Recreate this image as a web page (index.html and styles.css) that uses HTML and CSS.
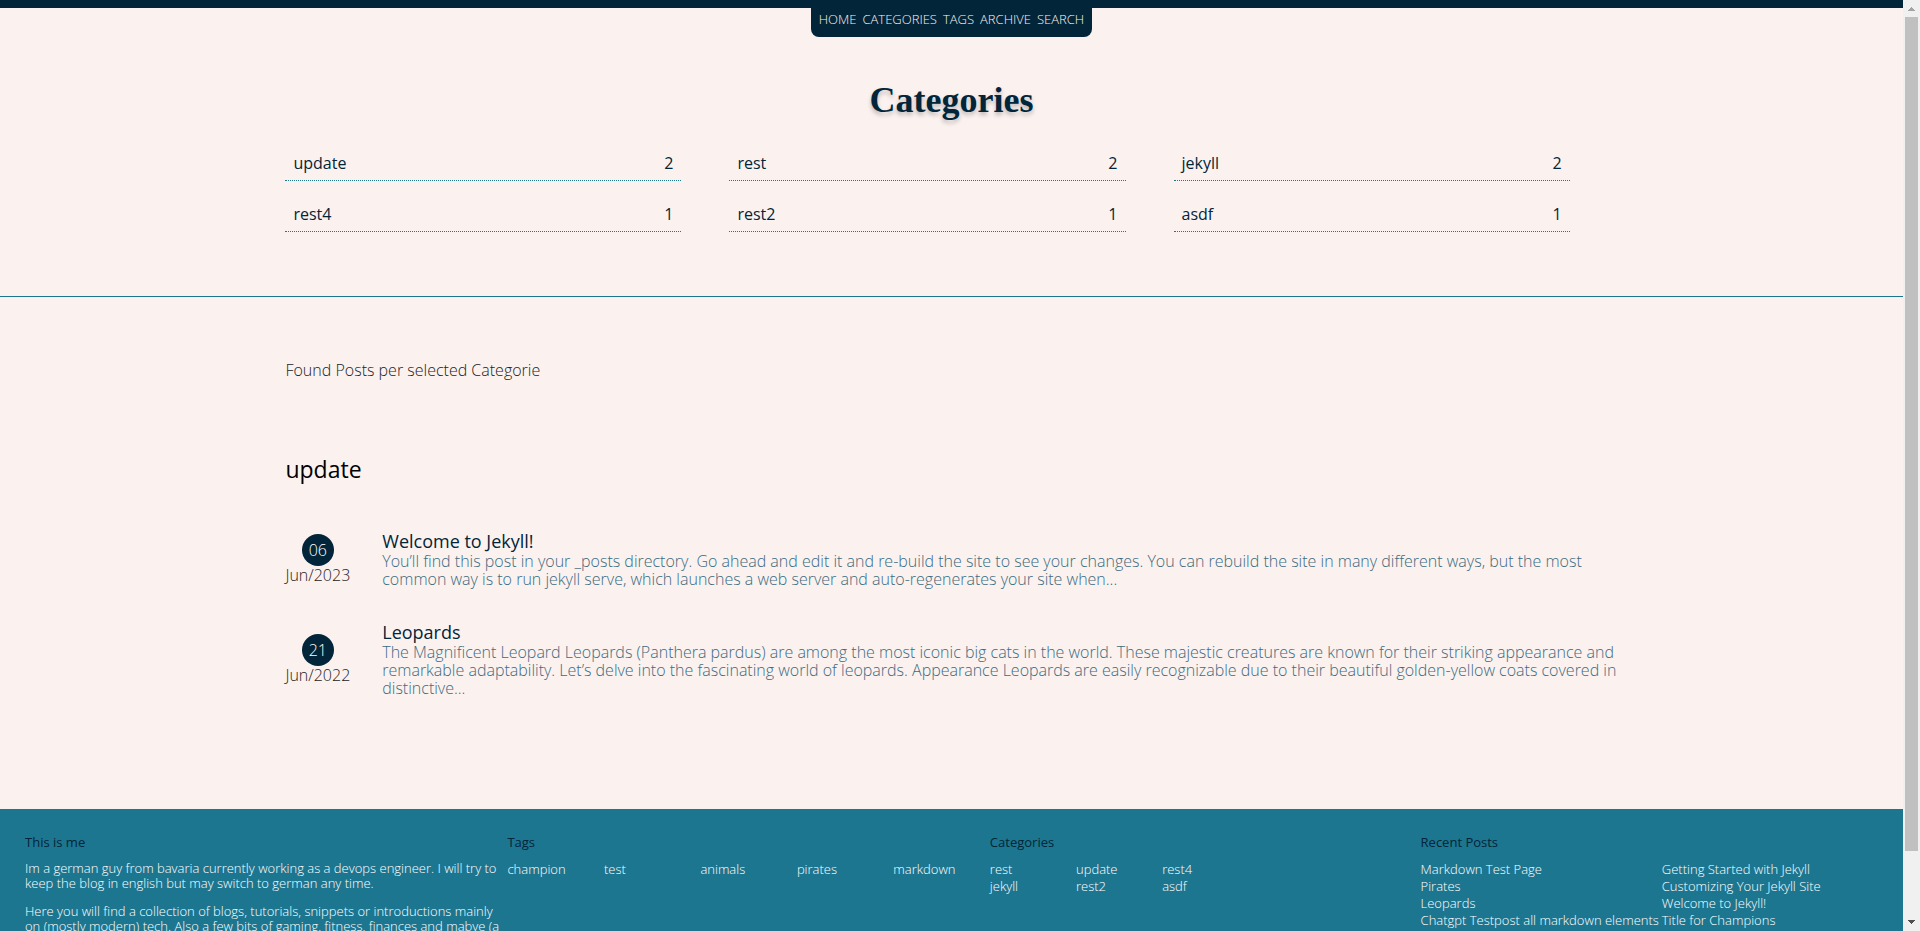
FILE: index.html
```html
<!DOCTYPE html>
<html lang="en">
<head>
<meta charset="utf-8">
<title>Categories</title>
<link rel="stylesheet" href="styles.css">
</head>
<body>
<div class="page">
  <header class="topbar">
    <nav class="nav">
      <a href="#">HOME</a>
      <a href="#">CATEGORIES</a>
      <a href="#">TAGS</a>
      <a href="#">ARCHIVE</a>
      <a href="#">SEARCH</a>
    </nav>
  </header>
  <main>
    <section class="overview">
      <h1>Categories</h1>
      <div class="category-grid">
        <a href="#"><span>update</span><span>2</span></a>
        <a href="#"><span>rest</span><span>2</span></a>
        <a href="#"><span>jekyll</span><span>2</span></a>
        <a href="#"><span>rest4</span><span>1</span></a>
        <a href="#"><span>rest2</span><span>1</span></a>
        <a href="#"><span>asdf</span><span>1</span></a>
      </div>
    </section>
    <section class="results">
      <p class="found">Found Posts per selected Categorie</p>
      <h2>update</h2>
      <article class="post">
        <div class="date"><span class="day">06</span><span>Jun/2023</span></div>
        <div class="summary">
          <h3><a href="#">Welcome to Jekyll!</a></h3>
          <p>You’ll find this post in your _posts directory. Go ahead and edit it and re-build the site to see your changes. You can rebuild the site in many different ways, but the most common way is to run jekyll serve, which launches a web server and auto-regenerates your site when...</p>
        </div>
      </article>
      <article class="post">
        <div class="date"><span class="day">21</span><span>Jun/2022</span></div>
        <div class="summary">
          <h3><a href="#">Leopards</a></h3>
          <p>The Magnificent Leopard Leopards (Panthera pardus) are among the most iconic big cats in the world. These majestic creatures are known for their striking appearance and remarkable adaptability. Let’s delve into the fascinating world of leopards. Appearance Leopards are easily recognizable due to their beautiful golden-yellow coats covered in distinctive...</p>
        </div>
      </article>
    </section>
  </main>
  <footer class="footer">
    <section class="about">
      <h4>This is me</h4>
      <p>Im a german guy from bavaria currently working as a devops engineer. I will try to keep the blog in english but may switch to german any time.</p>
      <p>Here you will find a collection of blogs, tutorials, snippets or introductions mainly on (mostly modern) tech. Also a few bits of gaming, fitness, finances and mabye (a</p>
    </section>
    <section>
      <h4>Tags</h4>
      <div class="links five">
        <a href="#">champion</a><a href="#">test</a><a href="#">animals</a><a href="#">pirates</a><a href="#">markdown</a>
      </div>
    </section>
    <section>
      <h4>Categories</h4>
      <div class="links five">
        <a href="#">rest</a><a href="#">update</a><a href="#" class="row-end">rest4</a>
        <a href="#">jekyll</a><a href="#">rest2</a><a href="#">asdf</a>
      </div>
    </section>
    <section>
      <h4>Recent Posts</h4>
      <div class="links two">
        <a href="#">Markdown Test Page</a><a href="#">Getting Started with Jekyll</a>
        <a href="#">Pirates</a><a href="#">Customizing Your Jekyll Site</a>
        <a href="#">Leopards</a><a href="#">Welcome to Jekyll!</a>
        <a href="#">Chatgpt Testpost all markdown elements</a><a href="#">Title for Champions</a>
      </div>
    </section>
  </footer>
</div>
<div class="scrollbar" aria-hidden="true">
  <svg width="17" height="17" viewBox="0 0 17 17" shape-rendering="crispEdges"><path d="M8 7h1v1h1v1h1v1h1v1H5v-1h1V9h1V8h1z" fill="#a3a3a3"/></svg>
  <div class="track"><div class="thumb"></div></div>
  <svg width="17" height="17" viewBox="0 0 17 17" shape-rendering="crispEdges"><path d="M5 6h7v1h-1v1h-1v1H9v1H8V9H7V8H6V7H5z" fill="#505050"/></svg>
</div>
</body>
</html>
```
FILE: styles.css
```css
* { box-sizing: border-box; }

body {
  margin: 0;
  height: 100vh;
  display: flex;
  overflow: hidden;
  background: #fbf2f0;
  color: #222;
  font: 300 16px/18px "Open Sans", sans-serif;
}

h1, h2, h3, h4, p { margin: 0; }
a { color: inherit; text-decoration: none; }

.page {
  flex: 1;
  min-width: 0;
  overflow-y: auto;
  scrollbar-width: none;
}

.topbar {
  height: 37px;
  border-top: 8px solid #022539;
  display: flex;
  justify-content: center;
}

.nav {
  display: flex;
  gap: 6px;
  padding: 2px 8px 0;
  background: #022539;
  border-radius: 0 0 8px 8px;
  color: #fbf2f0;
  font-size: 13px;
}

.overview {
  padding: 39px 15% 64px;
  border-bottom: 1px solid #1d7690;
}

h1 {
  text-align: center;
  color: #022539;
  font: bold 36px/48px "Liberation Serif", serif;
  text-shadow: 0 3px 4px rgba(0, 0, 0, 0.25);
}

.category-grid {
  display: grid;
  grid-template-columns: repeat(3, 1fr);
  row-gap: 16px;
  padding-top: 22px;
}

.category-grid a {
  display: flex;
  justify-content: space-between;
  margin-right: 48px;
  padding: 8px;
  border-bottom: 1px dotted #1d7690;
  color: #022539;
  font-weight: 400;
}

.results { padding: 64px 15% 79px; }
.found { padding-bottom: 74px; }

h2 {
  padding-bottom: 45px;
  color: #000;
  font-size: 23px;
  line-height: 32px;
  font-weight: 400;
}

.post {
  display: flex;
  align-items: center;
  gap: 32px;
  margin-bottom: 33px;
}

.date {
  flex: none;
  display: flex;
  flex-direction: column;
  align-items: center;
}

.day {
  width: 32px;
  height: 32px;
  border-radius: 50%;
  background: #022539;
  color: #fff;
  line-height: 32px;
  text-align: center;
}

h3 {
  color: #022539;
  font-size: 18px;
  line-height: 22px;
  font-weight: 400;
}

.summary p { color: #3a6a7e; }

.footer {
  display: grid;
  grid-template-columns: 28fr 28fr 25fr 28fr;
  min-height: 200px;
  padding: 24px 0 24px 25px;
  background: #1d7690;
  color: #fff;
  font-size: 13px;
  line-height: 15px;
}

h4 {
  padding-bottom: 10px;
  color: #022539;
  font-size: 13px;
  line-height: 18px;
  font-weight: 400;
}

.about p { padding-bottom: 13px; }

.links { display: grid; line-height: 17px; }
.five { grid-template-columns: repeat(5, 1fr); }
.two { grid-template-columns: repeat(2, 1fr); }
.row-end { grid-column: 3 / -1; }

.scrollbar {
  flex: none;
  width: 17px;
  display: flex;
  flex-direction: column;
  background: #f0f0f0;
}

.track { flex: 1; padding: 0 2px; }
.thumb { height: 93%; background: #c0c0c0; }
```
